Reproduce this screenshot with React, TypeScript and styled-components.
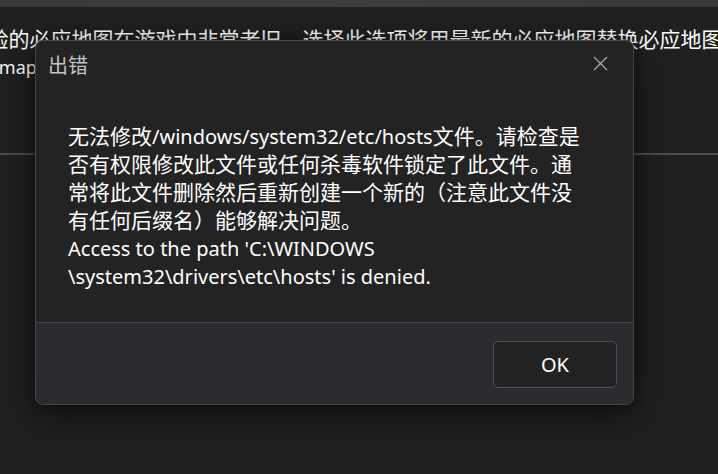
import React from "react";
import styled, { createGlobalStyle } from "styled-components";

const Global = createGlobalStyle`
  html, body { margin: 0; padding: 0; background: #202020; }
  * { box-sizing: border-box; }
`;

const FONT = `"Segoe UI", "Noto Sans", "Noto Sans CJK SC", sans-serif`;

const Page = styled.div`
  position: relative;
  width: 718px;
  height: 474px;
  overflow: hidden;
  background: #202020;
  font-family: ${FONT};
  color: #ffffff;
`;

const TopStrip = styled.div`
  height: 7px;
  background: linear-gradient(90deg, #3a3a3a, #3f3f3f 50%, #393939);
`;

const Description = styled.div`
  margin-top: 18px;
  margin-left: -12.6px;
  line-height: 28px;
  white-space: nowrap;
`;

const DescLine = styled.div<{ $indent?: number; $size?: number }>`
  height: 28px;
  margin-left: ${(p) => p.$indent ?? 0}px;
  font-size: ${(p) => p.$size ?? 21}px;
`;

const Divider = styled.div`
  margin-top: 72px;
  height: 2px;
  background: #4a4e58;
`;

const Dialog = styled.div`
  position: absolute;
  left: 35px;
  top: 40px;
  width: 599px;
  display: flex;
  flex-direction: column;
  background: #232323;
  border: 1px solid #464646;
  border-radius: 8px;
  overflow: hidden;
  box-shadow: 0 10px 40px rgba(0, 0, 0, 0.55), 0 2px 10px rgba(0, 0, 0, 0.3);
`;

const TitleBar = styled.div`
  height: 51px;
  display: flex;
  align-items: center;
  justify-content: space-between;
  padding: 0 25px 4px 12px;
`;

const Title = styled.div`
  font-size: 20px;
  color: #c4c4c4;
  font-family: "Noto Sans CJK SC", sans-serif;
`;

const CloseButton = styled.div`
  width: 16px;
  height: 16px;
  display: flex;
  align-items: center;
  justify-content: center;
  margin-top: -2px;
`;

const Body = styled.div`
  padding: 31px 20px 31px 32px;
  font-size: 20px;
  line-height: 28px;
  color: #ffffff;
  white-space: nowrap;
`;

const BodyLine = styled.div`
  height: 28px;
`;

const Han = styled.span`
  font-size: 21px;
  line-height: 1;
`;

const Footer = styled.div`
  display: flex;
  justify-content: flex-end;
  background: #2a2b2f;
  border-top: 1px solid #41454e;
  padding: 18px 16px 16px;
`;

const OkButton = styled.button`
  width: 124px;
  height: 47px;
  border: 1.5px solid #4b505b;
  border-radius: 5px;
  background: #222222;
  color: #ffffff;
  font-family: ${FONT};
  font-size: 20px;
  padding: 0;
`;

export default function App() {
  return (
    <>
      <Global />
      <Page>
        <TopStrip />
        <Description>
          <DescLine>验的必应地图在游戏中非常老旧，选择此选项将用最新的必应地图替换必应地图</DescLine>
          <DescLine $indent={11.4} $size={18}>map</DescLine>
        </Description>
        <Divider />
        <Dialog>
          <TitleBar>
            <Title>出错</Title>
            <CloseButton>
              <svg width="15" height="15" viewBox="0 0 15 15">
                <path d="M1 1 L14 14 M14 1 L1 14" stroke="#a8a8a8" strokeWidth="1.3" fill="none" />
              </svg>
            </CloseButton>
          </TitleBar>
          <Body>
            <BodyLine><Han>无法修改</Han>/windows/system32/etc/hosts<Han>文件。请检查是</Han></BodyLine>
            <BodyLine><Han>否有权限修改此文件或任何杀毒软件锁定了此文件。通</Han></BodyLine>
            <BodyLine><Han>常将此文件删除然后重新创建一个新的（注意此文件没</Han></BodyLine>
            <BodyLine><Han>有任何后缀名）能够解决问题。</Han></BodyLine>
            <BodyLine>Access to the path 'C:\WINDOWS</BodyLine>
            <BodyLine>\system32\drivers\etc\hosts' is denied.</BodyLine>
          </Body>
          <Footer>
            <OkButton>OK</OkButton>
          </Footer>
        </Dialog>
      </Page>
    </>
  );
}
